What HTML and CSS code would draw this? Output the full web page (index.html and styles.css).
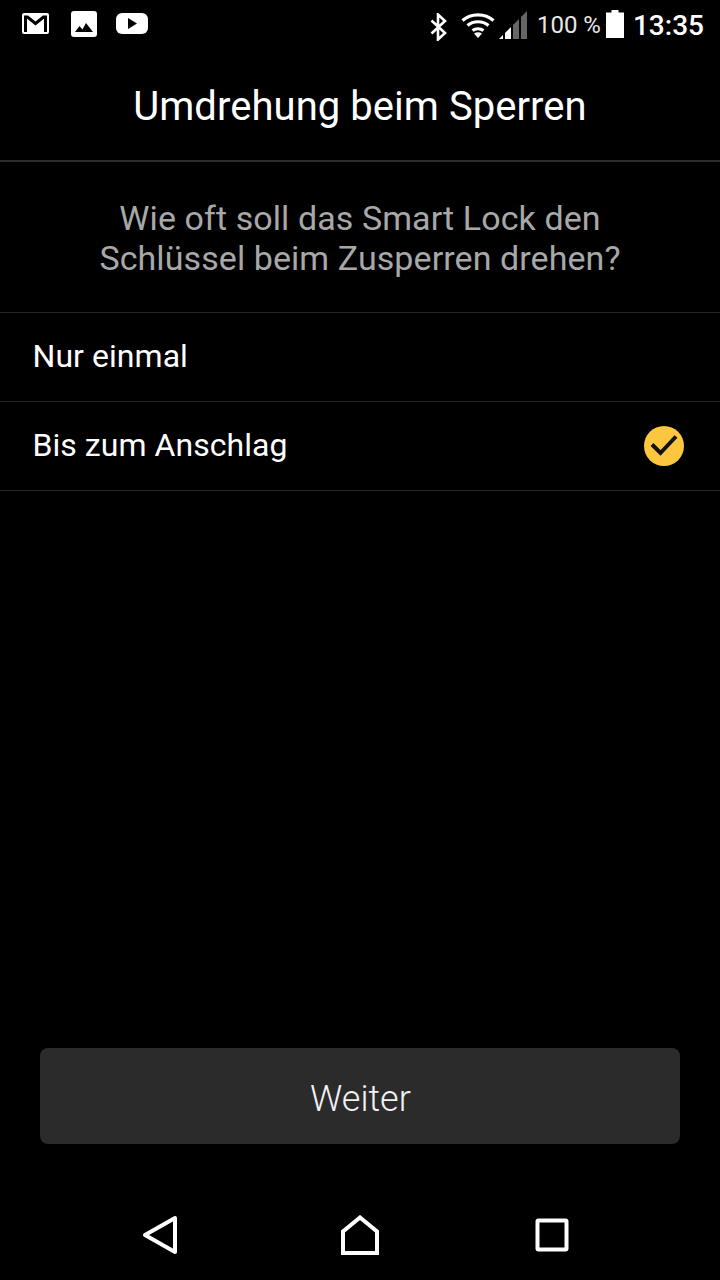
FILE: index.html
```html
<!DOCTYPE html>
<html lang="de">
<head>
<meta charset="utf-8">
<title>Umdrehung beim Sperren</title>
<link rel="stylesheet" href="styles.css">
</head>
<body>
<div class="screen">
  <div class="status">
    <div class="status-left">
      <svg class="ic-gmail" width="27" height="21" viewBox="0 0 27 21"><rect x="0" y="0" width="27" height="21" rx="2" fill="#fff"/><path d="M3.500 19V4h2L13.500 10.500 21.500 4h2v15" fill="none" stroke="#000" stroke-width="3"/></svg>
      <svg class="ic-photo" width="26" height="26" viewBox="0 0 26 26"><rect x="0" y="0" width="26" height="26" rx="3" fill="#fff"/><path d="M4 21l4.500-6 3 3.500 3.500-6.500 7 9z" fill="#000"/></svg>
      <svg class="ic-yt" width="32" height="21" viewBox="0 0 32 21"><rect x="0" y="0" width="32" height="21" rx="6" fill="#fff"/><path d="M12 5l9 5.500-9 5.500z" fill="#000"/></svg>
    </div>
    <div class="status-right">
      <svg class="ic-bt" width="20" height="28" viewBox="0 0 20 28"><path d="M2.500 7.500L16 20l-7 6.500V1.500L16 8 2.500 20.500" fill="none" stroke="#fff" stroke-width="2.600"/></svg>
      <svg class="ic-wifi" width="34" height="26" viewBox="0 0 34 26"><path d="M1.500 8.500C10 1 24 1 32.500 8.500M6.500 13.500C12.500 8.500 21.500 8.500 27.500 13.500" fill="none" stroke="#fff" stroke-width="3.200"/><path d="M11.500 18.500C14.500 16 19.500 16 22.500 18.500" fill="none" stroke="#fff" stroke-width="3"/><path d="M13 21.500c2.500-1.700 5.500-1.700 8 0l-4 4.500z" fill="#fff"/></svg>
      <svg class="ic-signal" width="28" height="28" viewBox="0 0 28 28"><path d="M0 28l4-4v4z" fill="#fff"/><path d="M6 22l6-6v12H6z" fill="#fff"/><path d="M14 14l6-6v20h-6z" fill="#666"/><path d="M22 6l6-6v28h-6z" fill="#666"/></svg>
      <span class="pct">100 %</span>
      <svg class="ic-batt" width="18" height="28" viewBox="0 0 18 28"><path d="M5.500 0h7v2.500H18V28H0V2.500h5.500z" fill="#fff"/></svg>
      <span class="time">13:35</span>
    </div>
  </div>
  <header class="title-bar"><h1 class="title">Umdrehung beim Sperren</h1></header>
  <p class="question">Wie oft soll das Smart Lock den<br>Schlüssel beim Zusperren drehen?</p>
  <ul class="options">
    <li class="option">Nur einmal</li>
    <li class="option">Bis zum Anschlag
      <svg class="check" width="40" height="40" viewBox="0 0 40 40"><circle cx="20" cy="20" r="20" fill="#fcc63f"/><path d="M8 18.500l8.500 8.500L32 10.500" fill="none" stroke="#111" stroke-width="4"/></svg>
    </li>
  </ul>
  <div class="spacer"></div>
  <div class="action"><button class="next">Weiter</button></div>
  <nav class="nav">
    <svg class="nav-back" width="36" height="40" viewBox="0 0 36 40"><path d="M3 20L33 3v34z" fill="none" stroke="#fff" stroke-width="4" stroke-linejoin="round"/></svg>
    <svg class="nav-home" width="40" height="40" viewBox="0 0 40 40"><path d="M3 38V16.500L20 2.500l17 14V38z" fill="none" stroke="#fff" stroke-width="4"/></svg>
    <svg class="nav-recent" width="34" height="34" viewBox="0 0 34 34"><rect x="2.500" y="2.500" width="29" height="29" rx="1" fill="none" stroke="#fff" stroke-width="4"/></svg>
  </nav>
</div>
</body>
</html>
```

FILE: styles.css
```css
* { box-sizing: border-box; }
html, body { margin: 0; padding: 0; background: #000; }
.screen {
  width: 720px; height: 1280px; background: #000; color: #fff;
  display: flex; flex-direction: column;
  font-family: Roboto, "Liberation Sans", sans-serif;
}
.status {
  height: 50px; display: flex; justify-content: space-between; align-items: center;
  padding: 0 16px 0 22px;
}
.status-left { display: flex; align-items: center; padding-bottom: 3px; }
.ic-gmail { margin-right: 22px; }
.ic-photo { margin-right: 19px; }
.status-right { display: flex; align-items: center; }
.ic-bt { margin-right: 12px; margin-top: 4px; }
.ic-wifi { margin-right: 4px; }
.ic-signal { margin-right: 10px; }
.pct { font-size: 24px; color: #e8e8e8; margin-right: 5px; }
.ic-batt { margin-right: 9px; margin-bottom: 2px; }
.time { font-size: 28px; font-weight: 500; }
.title-bar {
  height: 112px; border-bottom: 2px solid #2e2e2e;
  display: flex; align-items: center; justify-content: center; padding-top: 3px;
}
.title { margin: 0; font-size: 40px; font-weight: 400; line-height: 44px; letter-spacing: 0.05px; }
.question {
  margin: 0; height: 151px; padding-top: 36px;
  text-align: center; font-size: 34px; line-height: 40px; color: #a8a8a8; letter-spacing: 0.08px;
  border-bottom: 1px solid #262626;
}
.options { list-style: none; margin: 0; padding: 0; }
.option {
  height: 89px; padding: 0 36px 2px 32.5px; font-size: 32px; letter-spacing: 0.05px;
  display: flex; align-items: center; justify-content: space-between;
  border-bottom: 1px solid #262626;
}
.check { margin-top: 2px; }
.spacer { flex: 1; }
.action { padding: 0 40px; margin-bottom: 56px; }
.next {
  display: block; width: 100%; height: 96px; border: 0; border-radius: 8px; padding: 6px 0 0 1px;
  background: #2b2b2b; color: #f2f2f2; font-family: inherit; font-size: 36px; font-weight: 300;
}
.nav {
  height: 70px; margin-bottom: 10px;
  display: flex; align-items: center;
  padding-left: 142px;
}
.nav-back { margin-right: 162px; }
.nav-home { margin-right: 155px; }
```
